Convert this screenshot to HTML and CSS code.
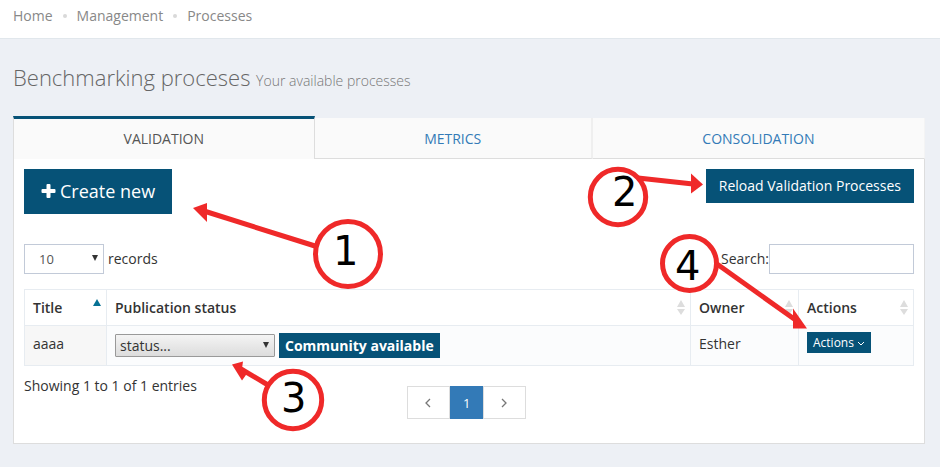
FILE: index.html
```html
<!DOCTYPE html>
<html lang="en">
<head>
<meta charset="utf-8">
<title>Benchmarking proceses</title>
<link rel="stylesheet" href="styles.css">
</head>
<body>
<nav class="breadcrumb" aria-label="Breadcrumb">
  <a href="#">Home</a><span class="dot"></span><a href="#">Management</a><span class="dot"></span><a href="#">Processes</a>
</nav>
<main class="page">
  <h1 class="title">Benchmarking proceses <small>Your available processes</small></h1>
  <div class="tabs">
    <a class="tab active" href="#">VALIDATION</a>
    <a class="tab" href="#">METRICS</a>
    <a class="tab" href="#">CONSOLIDATION</a>
  </div>
  <section class="panel">
    <div class="toolbar">
      <button class="btn btn-lg" type="button"><svg class="plus" viewBox="0 0 14 14" aria-hidden="true"><path d="M6 0h2q1 0 1 1v4h4q1 0 1 1v2q0 1-1 1H9v4q0 1-1 1H6q-1 0-1-1V9H1Q0 9 0 8V6q0-1 1-1h4V1q0-1 1-1z"/></svg>Create new</button>
      <button class="btn" type="button">Reload Validation Processes</button>
    </div>
    <div class="filters">
      <label class="length"><span class="select-wrap"><select class="length-select"><option>10</option></select><svg class="arrow" viewBox="0 0 6 6" aria-hidden="true"><path d="M0 0h6L3 6z"/></svg></span>records</label>
      <label class="search">Search:<input type="search"></label>
    </div>
    <table>
      <colgroup><col class="c-title"><col><col class="c-owner"><col class="c-actions"></colgroup>
      <thead>
        <tr>
          <th><div class="head">Title<svg class="sort up" viewBox="0 0 8 18" aria-hidden="true"><path d="M4 1l4 7H0z"/></svg></div></th>
          <th><div class="head">Publication status<svg class="sort" viewBox="0 0 8 18" aria-hidden="true"><path d="M4 1l4 7H0zM0 10h8l-4 6z"/></svg></div></th>
          <th><div class="head">Owner<svg class="sort" viewBox="0 0 8 18" aria-hidden="true"><path d="M4 1l4 7H0zM0 10h8l-4 6z"/></svg></div></th>
          <th><div class="head">Actions<svg class="sort" viewBox="0 0 8 18" aria-hidden="true"><path d="M4 1l4 7H0zM0 10h8l-4 6z"/></svg></div></th>
        </tr>
      </thead>
      <tbody>
        <tr>
          <td class="sorted">aaaa</td>
          <td><div class="status"><span class="select-wrap"><select class="status-select" aria-label="Status"><option>status...</option></select><svg class="arrow" viewBox="0 0 6 6" aria-hidden="true"><path d="M0 0h6L3 6z"/></svg></span><span class="badge">Community available</span></div></td>
          <td>Esther</td>
          <td class="act"><button class="btn btn-xs" type="button">Actions<svg class="chev" viewBox="0 0 8 6" aria-hidden="true"><path d="M1 1l3 3 3-3"/></svg></button></td>
        </tr>
      </tbody>
    </table>
    <div class="footer">
      <div class="info">Showing 1 to 1 of 1 entries</div>
      <div class="pager">
        <a href="#" aria-label="Previous"><svg class="page-arrow" viewBox="0 0 6 10" aria-hidden="true"><path d="M5 1L1 5l4 4"/></svg></a><a href="#" class="current">1</a><a href="#" aria-label="Next"><svg class="page-arrow" viewBox="0 0 6 10" aria-hidden="true"><path d="M1 1l4 4-4 4"/></svg></a>
      </div>
    </div>
  </section>
</main>
<svg class="callouts" width="940" height="467" viewBox="0 0 940 467">
  <g class="line">
    <path d="M315 246L204 211"/><circle cx="348" cy="254" r="32.5"/>
    <path d="M638 178L693 184"/><circle cx="618" cy="197" r="27.7"/>
    <path d="M268 385L241 369"/><circle cx="293" cy="400" r="28.7"/>
    <path d="M717 264L797 321"/><circle cx="689.5" cy="263.5" r="27"/>
  </g>
  <g class="tip">
    <path d="M193 208l14-5v19z"/><path d="M703 184.500l-12-11v20z"/><path d="M232 364.500l11-3-1 7 5 5-5 7z"/><path d="M807 328.500l-14-20v20z"/>
  </g>
  <text x="333" y="265">1</text><text x="612" y="206">2</text><text x="281" y="412">3</text><text x="675" y="280">4</text>
</svg>
</body>
</html>
```

FILE: styles.css
```css
* { box-sizing: border-box; }
body {
  margin: 0;
  position: relative;
  min-height: 100vh;
  background: #edf0f5;
  color: #333;
  font: 14px/20px "Open Sans", sans-serif;
}
a { text-decoration: none; }
.breadcrumb {
  display: flex;
  align-items: center;
  height: 39px;
  padding: 0 13px 7px;
  background: #fff;
  border-bottom: 1px solid #e1e7ec;
}
.breadcrumb a { color: #888; }
.dot { width: 4px; height: 4px; margin: 0 10px; border-radius: 50%; background: #d9d9d9; }
.page { padding: 23px 15px 23px 13px; }
.title { margin: 0 0 24px; font-size: 22px; font-weight: 300; line-height: 30px; color: #666; }
.title { margin-bottom: 20px; }
.title small { font-size: 14px; font-weight: 300; color: #777; }
.tabs { display: flex; align-items: flex-end; height: 43px; }
.tabs { margin-top: 4px; }
.tab {
  flex: 1 1 auto;
  height: 41px;
  padding: 11px 10px 9px;
  background: #fafafa;
  border-right: 2px solid #efefef;
  border-bottom: 1px solid #ddd;
  text-align: center;
  color: #337ab7;
}
.tab:last-child { border-right: 1px solid #f4f4f4; }
.tab.active {
  height: 43px;
  padding-top: 10px;
  color: #555;
  border: solid #ddd;
  border-width: 3px 1px 0;
  border-top-color: #065277;
}
.panel { padding: 10px; background: #fff; border: 1px solid #ddd; border-top: 0; }
.toolbar { display: flex; justify-content: space-between; align-items: flex-start; }
.btn {
  border: 0;
  padding: 7px 13px;
  background: #065277;
  color: #fff;
  font: inherit;
}
.btn-lg { padding: 10px 17px; font-size: 18px; line-height: 25px; }
.plus { width: 15px; height: 14px; margin-right: 4px; fill: #fff; }
.filters { display: flex; justify-content: space-between; margin: 30px 0 15px; }
.filters label { display: flex; align-items: center; line-height: 28px; }
.length { gap: 4px; }
.select-wrap { position: relative; display: block; }
select, input { display: block; margin: 0; border-radius: 0; appearance: none; }
.length-select {
  width: 80px;
  height: 30px;
  padding: 0 14px;
  border: 1px solid #c2cad8;
  background: #fff;
  color: #555;
  font: 13px "Open Sans", sans-serif;
}
.arrow { position: absolute; right: 6px; top: 50%; width: 6px; height: 6px; margin-top: -4px; fill: #333; }
.search input { width: 145px; height: 30px; padding: 0 10px; border: 1px solid #c2cad8; font: inherit; }
table { width: 100%; table-layout: fixed; border-collapse: collapse; }
.c-title { width: 82px; }
.c-owner { width: 108px; }
.c-actions { width: 115px; }
th, td { border: 1px solid #e7ecf1; padding: 8px; text-align: left; vertical-align: top; }
th { height: 36px; padding: 8px 5px 7px 8px; font-weight: 600; }
.head { display: flex; justify-content: space-between; align-items: center; }
.sort { width: 8px; height: 18px; fill: #ddd; }
.sort.up { fill: #067194; align-self: flex-start; }
td { height: 40px; background: #fbfcfd; }
.sorted { background: #f7f7f7; }
.status { display: flex; align-items: center; gap: 4px; height: 25px; }
.status-select {
  width: 160px;
  height: 23px;
  padding: 0 4px;
  border: 1px solid #999;
  border-radius: 1px;
  background: linear-gradient(#f4f4f4, #dcdcdc);
  color: #333;
  font: 14px "Open Sans", sans-serif;
}
td:nth-child(2) { padding-top: 7px; padding-bottom: 7px; }
.badge { padding: 3px 6px 2px; background: #065277; color: #fff; font-weight: 700; }
td.act { padding-top: 6px; padding-bottom: 6px; }
.btn-xs { display: block; padding: 2px 6px 1px; font-size: 12px; line-height: 18px; }
.chev { width: 8px; height: 6px; margin-left: 3px; fill: none; stroke: #fff; }
.footer { display: grid; grid-template-columns: 43% auto 1fr; padding: 10px 0 14px; }
.pager { display: flex; margin: 10px 0 0; }
.pager a {
  display: flex;
  align-items: center;
  justify-content: center;
  width: 43px;
  height: 33px;
  border: 1px solid #ddd;
  font-size: 13px;
}
.pager .current { width: 34px; margin: 0 -1px 0 0; background: #337ab7; border-color: #337ab7; color: #fff; }
.page-arrow { width: 6px; height: 10px; fill: none; stroke: #777; stroke-width: 1.3; }
.callouts { position: absolute; left: 0; top: 0; pointer-events: none; }
.callouts .line { fill: none; stroke: #ef2929; stroke-width: 5px; }
.callouts .tip { fill: #ef2929; }
.callouts text { font: 40px "DejaVu Sans", sans-serif; fill: #000; }
```
